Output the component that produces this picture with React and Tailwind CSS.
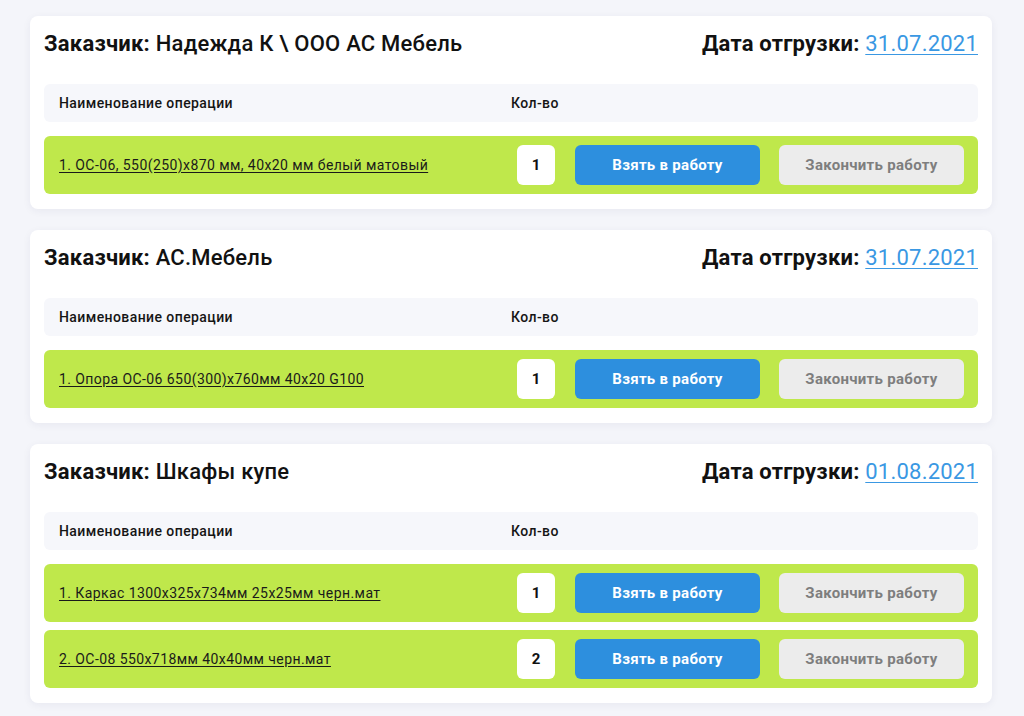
import React from 'react';

const orders = [
  {
    id: 1,
    customer: 'Надежда К \\ ООО АС Мебель',
    date: '31.07.2021',
    items: [{ name: '1. ОС-06, 550(250)x870 мм, 40x20 мм белый матовый', qty: 1 }],
  },
  {
    id: 2,
    customer: 'АС.Мебель',
    date: '31.07.2021',
    items: [{ name: '1. Опора ОС-06 650(300)x760мм 40x20 G100', qty: 1 }],
  },
  {
    id: 3,
    customer: 'Шкафы купе',
    date: '01.08.2021',
    items: [
      { name: '1. Каркас 1300x325x734мм 25x25мм черн.мат', qty: 1 },
      { name: '2. ОС-08 550x718мм 40x40мм черн.мат', qty: 2 },
    ],
  },
];

function OrderCard({ order }) {
  return (
    <div className="bg-white rounded-lg shadow-[0_2px_8px_rgba(30,40,90,0.06)] px-[14px] pt-[14px] pb-[15px]">
      <div className="flex items-center justify-between h-[28px] text-[22px] leading-[28px] tracking-[0.01em] text-[#111]">
        <div>
          <span className="font-bold">Заказчик:</span>{' '}
          <span className="font-medium">{order.customer}</span>
        </div>
        <div>
          <span className="font-bold">Дата отгрузки:</span>{' '}
          <a href="#" className="text-[#3a98e3] underline underline-offset-[3px] decoration-1">{order.date}</a>
        </div>
      </div>

      <div className="mt-[26px] flex items-center h-[38px] px-[15px] bg-[#f6f7fb] rounded-md text-[14px] tracking-[0.03em] font-medium text-[#151515]">
        <div className="w-[452px]">Наименование операции</div>
        <div>Кол-во</div>
      </div>

      <div className="mt-[14px] flex flex-col gap-[8px]">
        {order.items.map((item, i) => (
          <div key={i} className="flex items-center h-[58px] pl-[15px] pr-[14px] bg-[#bfe84b] rounded-md">
            <a href="#" className="flex-1 text-[14px] tracking-[0.03em] text-[#1a1a1a] underline underline-offset-2">{item.name}</a>
            <div className="w-[38px] h-[40px] bg-white rounded-md flex items-center justify-center text-[15px] font-bold text-[#111]">
              {item.qty}
            </div>
            <button className="ml-[20px] w-[185px] h-[40px] rounded-md bg-[#2d8fde] text-white text-[15px] tracking-[0.02em] font-bold">
              Взять в работу
            </button>
            <button className="ml-[19px] w-[185px] h-[40px] rounded-md bg-[#ececec] text-[#7e7e7e] text-[15px] tracking-[0.02em] font-bold">
              Закончить работу
            </button>
          </div>
        ))}
      </div>
    </div>
  );
}

export default function App() {
  return (
    <div className="min-h-[716px] bg-[#f4f5fa] pt-[16px] pb-[12px] pl-[30px] pr-[32px] font-['Roboto',sans-serif]">
      <div className="flex flex-col gap-[21px]">
        {orders.map((o) => (
          <OrderCard key={o.id} order={o} />
        ))}
      </div>
    </div>
  );
}
